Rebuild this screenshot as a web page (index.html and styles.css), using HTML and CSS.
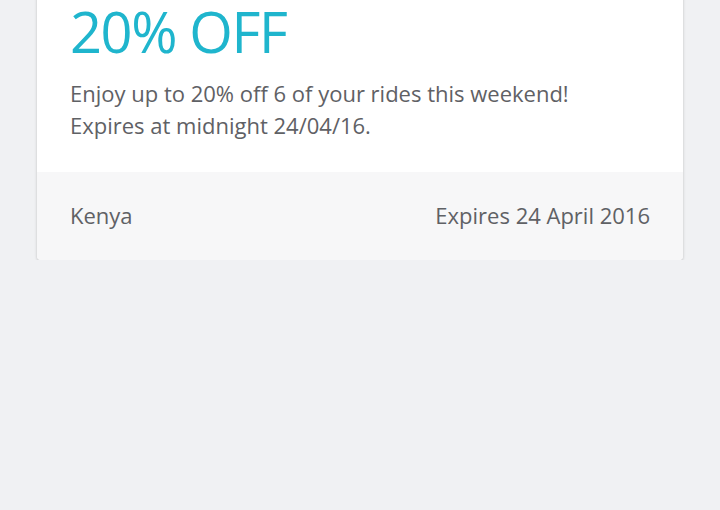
FILE: index.html
```html
<!DOCTYPE html>
<html lang="en">
<head>
  <meta charset="UTF-8"/>
  <title>Promotions</title>
  <link rel="stylesheet" href="styles.css">
</head>
<body>
<main class="page">
  <!-- Promotion card -->
  <article class="promo">
    <div class="promo-body">
      <h1 class="promo-title">20% OFF</h1>
      <p class="promo-text">Enjoy up to 20% off 6 of your rides this weekend!<br>Expires at midnight 24/04/16.</p>
    </div>
    <footer class="promo-footer">
      <span>Kenya</span>
      <span>Expires 24 April 2016</span>
    </footer>
  </article>
</main>
</body>
</html>
```

FILE: styles.css
```css
/* Page */
body {
    margin: 0;
    background: #f0f1f3;
    font-family: "Open Sans", sans-serif;
    color: #5f6165;
}

.page {
    padding: 0 37px;
    margin-top: -25px;
}

/* Card */
.promo {
    background: #ffffff;
    border-radius: 0 0 4px 4px;
    box-shadow: 0 1px 3px rgba(0, 0, 0, 0.22);
    overflow: hidden;
}

.promo-body {
    padding: 20px 33px 31px;
}

.promo-title {
    margin: 0;
    font-weight: normal;
    font-size: 56px;
    line-height: 72px;
    letter-spacing: -1.4px;
    color: #1fb5cd;
}

.promo-text {
    margin: 10px 0 0;
    font-size: 22px;
    line-height: 32px;
}

.promo-footer {
    display: flex;
    justify-content: space-between;
    background: #f7f7f8;
    padding: 28px 33px 30px;
    font-size: 22px;
    line-height: 30px;
}
```
